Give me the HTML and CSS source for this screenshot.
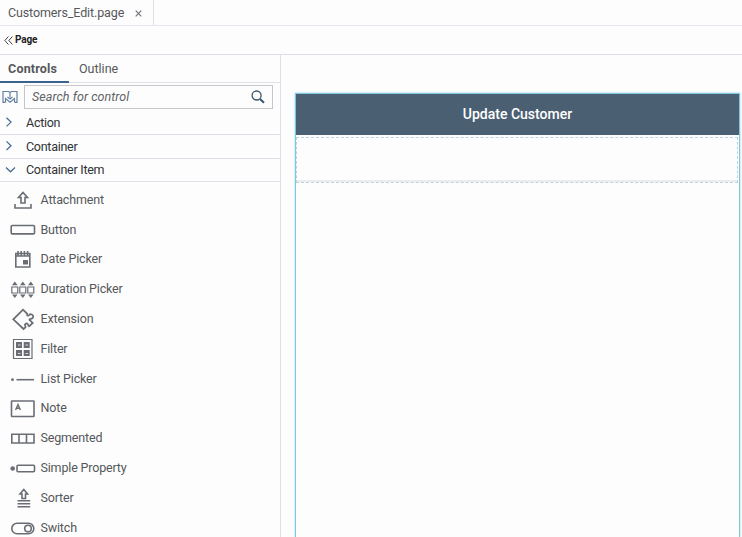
FILE: index.html
```html
<!DOCTYPE html>
<html lang="en">
<head>
<meta charset="utf-8">
<title>Customers_Edit.page</title>
<link rel="stylesheet" href="styles.css">
</head>
<body>
<div class="app">
  <header class="filebar"><div class="filetab"><span class="filename">Customers_Edit.page</span><svg class="close" width="7" height="7" viewBox="0 0 7 7"><path d="M.7.7l5.6 5.6M6.3.7L.7 6.3"/></svg></div></header>
  <div class="crumb"><svg width="9" height="9" viewBox="0 0 9 9"><path d="M4.4.5L.8 4.5l3.6 4M8.4.5L4.8 4.5l3.6 4"/></svg><b>Page</b></div>
  <main class="workspace">
    <aside class="panel">
      <nav class="tabs"><div class="tab active"><span>Controls</span></div><div class="tab"><span>Outline</span></div></nav>
      <div class="search">
        <svg class="palette" width="16" height="14" viewBox="0 0 16 14"><path d="M3.500 12.300H1V1.500H6.500L8 2.500 9.500 1.500H15V12.300H12.500M8 2.500V7.500M3.500 12.300V8.500L8 12.300l4.500-3.800v3.800M5.500 7L8 9l2.500-2"/></svg>
        <div class="field"><span>Search for control</span><svg width="14" height="14" viewBox="0 0 14 14"><circle cx="5.600" cy="5.500" r="4.500"/><path class="handle" d="M9 9l4 3.800"/></svg></div>
      </div>
      <div class="group"><svg width="12" height="12" viewBox="0 0 12 12"><path d="M2.500 .8L7 5.100 2.500 9.400"/></svg><span>Action</span></div>
      <div class="group"><svg width="12" height="12" viewBox="0 0 12 12"><path d="M2.500 .4L7 4.700 2.500 9"/></svg><span>Container</span></div>
      <div class="group open"><svg width="12" height="12" viewBox="0 0 12 12"><path d="M2 3.500L6.500 7.800l4.500-4.300"/></svg><span>Container Item</span></div>
      <ul class="items">
        <li><svg viewBox="0 0 26 24"><path d="M11 15V9.500H8.500L13 4.500 17.500 9.500H15V15zM5 16v4h16v-4"/></svg><span>Attachment</span></li>
        <li><svg viewBox="0 0 26 24"><rect x="1.200" y="7.500" width="23.300" height="8.400" rx="1"/></svg><span>Button</span></li>
        <li><svg viewBox="0 0 26 24"><path d="M5.800 6.500h14v13.500h-14zM5.800 9h14M8 4v4.500M11.200 4v4.500M14.400 4v4.500M17.600 4v4.500"/><path class="solid" d="M13 13h5v4.500h-5z"/></svg><span>Date Picker</span></li>
        <li><svg viewBox="0 0 26 24"><path d="M1.800 10h6v6h-6zM9.800 10h6v6h-6zM17.800 10h6v6h-6z" class="thin"/><path class="solid" d="M2 8.300l2.800-3.800 2.800 3.800zM10 8.300l2.800-3.800 2.800 3.800zM18 8.300l2.800-3.800 2.800 3.800zM2 17.500l2.800 3.500 2.800-3.500zM10 17.500l2.800 3.500 2.800-3.500zM18 17.500l2.800 3.500 2.800-3.500z"/></svg><span>Duration Picker</span></li>
        <li><svg class="puzzle" viewBox="0 0 26 24"><path d="M3.300 12.300L13 2.700l4.200 4.100c-.7 2 1 2.400 2 1.200 1.200-1.600 4.300-.4 4 1.700-.1 1.500-1.400 2.200-2.600 2.100-1.400 0-1.600 1.500-.2 1.900l2.300 2.300-3.500 3.300c-1.100-.4-.7-1.300-1.500-2.300-1.100-1.300-3.300.1-2.700 1.700.4.800 1 1 .4 1.700L13.500 22z"/></svg><span>Extension</span></li>
        <li><svg viewBox="0 0 26 24"><path class="thin" d="M3.500 2.500h18.500v19H3.500z"/><path class="solid" d="M6 5h6v6H6zM13.700 5h6v6h-6zM6 13h6v6H6zM13.700 13h6v6h-6z"/><path class="gap" d="M8 8h2.500M15.500 8h2.500M8 16.500h2.500M15.500 16.500h2.500"/></svg><span>Filter</span></li>
        <li><svg viewBox="0 0 26 24"><circle class="solid" cx="2.500" cy="12.700" r="1.400"/><path d="M6.500 12.700H24"/></svg><span>List Picker</span></li>
        <li><svg viewBox="0 0 26 24"><rect x="1.500" y="5" width="22.500" height="15.500" rx=".5"/><path class="a" d="M5.600 14L8 8.500l2.400 5.500M6.500 12.300h3"/></svg><span>Note</span></li>
        <li><svg viewBox="0 0 26 24"><path d="M1.800 8.300H24V17H1.800zM9 8.300V17M16.500 8.300V17"/></svg><span>Segmented</span></li>
        <li><svg viewBox="0 0 26 24"><circle class="solid" cx="2.700" cy="12.500" r="2.300"/><rect x="7" y="9.200" width="17.500" height="6.500" rx="1"/></svg><span>Simple Property</span></li>
        <li><svg viewBox="0 0 26 24"><path d="M12 12.500V8H10L13.800 3.500 17.600 8h-2.100v4.500zM7.500 14.800h12.700M7.500 17.800h12.700M7.500 20.800h12.700"/></svg><span>Sorter</span></li>
        <li><svg viewBox="0 0 26 24"><rect x="1.800" y="7.300" width="22" height="10.500" rx="5.250"/><circle cx="18" cy="12.550" r="3.300"/></svg><span>Switch</span></li>
      </ul>
    </aside>
    <section class="canvas"><div class="device"><div class="title"><span>Update Customer</span></div><div class="dropzone"></div></div></section>
  </main>
</div>
</body>
</html>
```
FILE: styles.css
```css
* { box-sizing: border-box; }
body { margin: 0; width: 742px; height: 537px; overflow: hidden; background: #fdfdfd; color: #55585b; font: 12.5px/16px Roboto, "Liberation Sans", sans-serif; letter-spacing: -.17px; }
svg { fill: none; stroke: #6a6e74; stroke-width: 1.6; flex: none; }
.app { display: flex; flex-direction: column; height: 537px; }
.filebar { height: 26px; border-bottom: 1px solid #e4e6ee; display: flex; flex: none; }
.filetab { width: 154px; border-right: 1px solid #dfe1ea; padding-left: 8px; display: flex; align-items: center; }
.filename { width: 127px; letter-spacing: -.12px; }
.close { margin-top: 2px; stroke-width: 1.1; }
.crumb { height: 29px; flex: none; border-bottom: 1px solid #dfe1ea; display: flex; align-items: center; padding-left: 4px; gap: 2px; font-size: 10px; color: #222; }
.crumb svg { stroke: #444; stroke-width: 1; margin-top: 1px; }
.workspace { display: flex; flex: 1; min-height: 0; }
.panel { width: 281px; border-right: 1px solid #dcdfea; overflow: hidden; flex: none; }
.tabs { display: flex; height: 28px; border-bottom: 1px solid #dfe1ea; }
.tab { height: 28px; padding: 6px 10px 0; letter-spacing: 0; }
.active { width: 69px; padding-left: 8px; font-weight: 700; border-bottom: 2px solid #3c6290; letter-spacing: .2px; }
.search { height: 29px; display: flex; padding: 2px 7px 3px 2px; align-items: center; }
.palette { stroke: #6481a3; stroke-width: 1.2; margin-right: 6px; }
.field { flex: 1; height: 24px; border: 1px solid #c5c6c9; display: flex; align-items: center; justify-content: space-between; padding: 0 7px; font-style: italic; color: #606366; letter-spacing: .05px; }
.field svg { stroke: #3d566f; stroke-width: 1.3; }
.field .handle { stroke-width: 2; }
.group { height: 24px; border-bottom: 1px solid #dfe1ea; display: flex; align-items: center; padding-left: 4px; gap: 10px; color: #303336; letter-spacing: -.27px; }
.group:nth-of-type(2) { height: 23px; }
.open { height: 23px; }
.group svg { stroke: #426b91; stroke-width: 1.2; }
.items { list-style: none; margin: 0; padding: 3px 0 0 10px; }
.items li { height: 29.8px; display: flex; align-items: center; gap: 4.5px; }
.items svg { width: 26px; height: 24px; }
.items .puzzle { stroke-width: 1.8; }
.items .solid { fill: #6a6e74; stroke: none; }
.thin { stroke-width: 1.2; }
.gap { stroke: #d6d9dd; stroke-width: 1; }
.a { stroke-width: 1.4; }
.canvas { flex: 1; padding: 38px 2px 0 14px; }
.device { height: 100%; border: 1px solid #80c8df; border-bottom: 0; box-shadow: 0 0 2px #8fd7ec; }
.title { height: 41px; background: #4b5f73; color: #fff; display: flex; align-items: center; justify-content: center; font-size: 14px; font-weight: 500; padding-bottom: 1px; letter-spacing: 0; }
.dropzone { margin: 2px 1px 0 0; height: 46px; border: 1px dashed #bdd2df; box-shadow: inset 0 -2px #ececee; }
```
